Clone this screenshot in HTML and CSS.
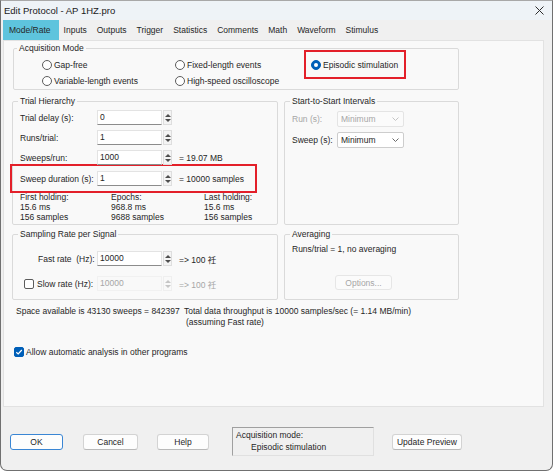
FILE: index.html
```html
<!DOCTYPE html>
<html lang="en">
    <head>
        <meta charset="utf-8">
        <title>Edit Protocol - AP 1HZ.pro</title>
        <link rel="stylesheet" href="styles.css">
    </head>
    <body>
        <div class="window">
            <div class="titlebar">
                <span class="title">Edit Protocol - AP 1HZ.pro</span>
                <svg class="close" width="9" height="9" viewBox="0 0 9 9"><path d="M0.5 0.5L8.5 8.5M8.5 0.5L0.5 8.5" stroke="#2b2b2b" stroke-width="1" fill="none"/></svg>
            </div>

            <ul class="tabs">
                <li class="current">Mode/Rate</li>
                <li>Inputs</li>
                <li>Outputs</li>
                <li>Trigger</li>
                <li>Statistics</li>
                <li>Comments</li>
                <li>Math</li>
                <li>Waveform</li>
                <li>Stimulus</li>
            </ul>

            <div class="panel">
                <!-- acquisition mode -->
                <fieldset class="group group-acq">
                    <legend>Acquisition Mode</legend>
                    <div class="modes">
                        <label class="radio"><span class="dot"></span>Gap-free</label>
                        <label class="radio"><span class="dot"></span>Fixed-length events</label>
                        <div class="mark mark-mode">
                            <label class="radio"><span class="dot on"></span>Episodic stimulation</label>
                        </div>
                        <label class="radio"><span class="dot"></span>Variable-length events</label>
                        <label class="radio"><span class="dot"></span>High-speed oscilloscope</label>
                    </div>
                </fieldset>

                <div class="row row-mid">
                    <fieldset class="group col-left">
                        <legend>Trial Hierarchy</legend>
                        <div class="trial">
                            <div class="field">
                                <span class="lbl">Trial delay (s):</span>
                                <span class="input">0</span><span class="spin"></span>
                            </div>
                            <div class="field">
                                <span class="lbl">Runs/trial:</span>
                                <span class="input">1</span><span class="spin"></span>
                            </div>
                            <div class="field">
                                <span class="lbl">Sweeps/run:</span>
                                <span class="input">1000</span><span class="spin"></span>
                                <span class="after">= 19.07 MB</span>
                            </div>
                            <div class="mark mark-sweep">
                                <div class="field">
                                    <span class="lbl">Sweep duration (s):</span>
                                    <span class="input">1</span><span class="spin"></span>
                                    <span class="after">= 10000 samples</span>
                                </div>
                            </div>
                            <div class="holding">
                                <div>First holding:<br>15.6 ms<br>156 samples</div>
                                <div>Epochs:<br>968.8 ms<br>9688 samples</div>
                                <div>Last holding:<br>15.6 ms<br>156 samples</div>
                            </div>
                        </div>
                    </fieldset>

                    <fieldset class="group col-right">
                        <legend>Start-to-Start Intervals</legend>
                        <div class="intervals">
                            <div class="field field-combo">
                                <span class="lbl lbl-short disabled">Run (s):</span>
                                <span class="combo combo-off">Minimum
                                    <svg width="7" height="4" viewBox="0 0 7 4"><path d="M0.5 0.5L3.5 3.5L6.5 0.5" stroke="#c4c4c4" fill="none"/></svg>
                                </span>
                            </div>
                            <div class="field field-combo">
                                <span class="lbl lbl-short">Sweep (s):</span>
                                <span class="combo">Minimum
                                    <svg width="7" height="4" viewBox="0 0 7 4"><path d="M0.5 0.5L3.5 3.5L6.5 0.5" stroke="#6a6a6a" fill="none"/></svg>
                                </span>
                            </div>
                        </div>
                    </fieldset>
                </div>

                <div class="row row-low">
                    <fieldset class="group col-left">
                        <legend>Sampling Rate per Signal</legend>
                        <div class="sampling">
                            <div class="field">
                                <span class="lbl lbl-fast">Fast rate&nbsp; (Hz):</span>
                                <span class="input">10000</span><span class="spin"></span>
                                <span class="after">=&gt; 100 祍</span>
                            </div>
                            <div class="field">
                                <span class="lbl lbl-slow"><span class="box"></span>Slow rate (Hz):</span>
                                <span class="input input-off">10000</span><span class="spin spin-off"></span>
                                <span class="after disabled">=&gt; 100 祍</span>
                            </div>
                        </div>
                    </fieldset>

                    <fieldset class="group col-right">
                        <legend>Averaging</legend>
                        <div class="averaging">
                            <div class="line">Runs/trial = 1, no averaging</div>
                            <span class="btn btn-off">Options...</span>
                        </div>
                    </fieldset>
                </div>

                <div class="info">
                    <div>Space available is 43130 sweeps = 842397</div>
                    <div>Total data throughput is 10000 samples/sec (= 1.14 MB/min)<br><span class="indent">(assuming Fast rate)</span></div>
                </div>

                <label class="check">
                    <span class="box on">
                        <svg width="8" height="8" viewBox="0 0 8 8"><path d="M1.3 4.2L3.2 6L6.8 2" stroke="#fff" stroke-width="1.2" fill="none"/></svg>
                    </span>Allow automatic analysis in other programs
                </label>
            </div>

            <div class="buttons">
                <span class="btn btn-default btn-ok">OK</span>
                <span class="btn btn-cancel">Cancel</span>
                <span class="btn btn-help">Help</span>
                <div class="status">Acquisition mode:<br><span class="status-val">Episodic stimulation</span></div>
                <span class="btn btn-preview">Update Preview</span>
            </div>
        </div>
    </body>
</html>
```

FILE: styles.css
```css
*{
    margin:0;
    padding:0;
    box-sizing:border-box;
}
body{
    background:#fff;
    font-family:"Liberation Sans", Arial, "Noto Sans CJK SC", sans-serif;
    font-size:8.5px;
    color:#262626;
}
.window{
    width:553px;
    height:471px;
    border:1px solid #707070;
    border-top-color:#a8a8a8;
    border-radius:0 0 7px 7px;
    background:#f0f0f0;
    overflow:hidden;
}

/* title + tabs */
.titlebar{
    height:19px;
    background:#eef3f7;
    display:flex;
    align-items:center;
    justify-content:space-between;
    padding:0 8px 0 3px;
    font-size:9.5px;
    color:#1a1a1a;
}
.close{
    display:block;
}
.tabs{
    list-style:none;
    display:flex;
    height:20px;
    margin-left:2px;
}
.tabs li{
    padding:0 5px;
    line-height:20px;
}
.tabs li.current{
    padding:0 8px 0 6px;
    background:#5ec4dd;
}

/* tab page */
.panel{
    margin-left:2px;
    width:541px;
    height:367px;
    background:#f9f9f9;
    border:1px solid #e2e2e2;
    padding:2px 0 0 8px;
}
.group{
    border:1px solid #dadada;
    border-radius:2px;
    padding:0;
    min-width:0;
}
.group legend{
    margin-left:5px;
    padding:0 2px;
    line-height:10px;
}
.group-acq{
    width:446px;
    margin-left:1px;
}
.group-acq legend{
    margin-left:3px;
}
.row{
    display:flex;
    gap:6px;
}
.row-mid{
    margin-top:6px;
}
.row-low{
    margin-top:4px;
}
.col-left{
    width:266px;
}
.col-right{
    width:175px;
}
.disabled{
    color:#a6a6a6;
}

/* red highlight boxes */
.mark{
    border:2px solid #e3202a;
}

/* acquisition mode */
.modes{
    display:grid;
    grid-template-columns:133px 129px 102px;
    grid-template-rows:16px 16px;
    padding:4px 0 0 28px;
}
.mark-mode{
    grid-column:3;
    grid-row:1 / 3;
    margin-top:-7px;
    height:29px;
    display:flex;
    align-items:center;
    padding-left:5px;
}
.radio{
    display:flex;
    align-items:center;
    gap:2px;
}
.dot{
    width:10px;
    height:10px;
    border:1px solid #5c5c5c;
    border-radius:50%;
    background:#fff;
    display:flex;
    align-items:center;
    justify-content:center;
}
.dot.on{
    border-color:#005fb8;
    background:#005fb8;
}
.dot.on::after{
    content:"";
    width:4px;
    height:4px;
    border-radius:50%;
    background:#fff;
}

/* fields */
.field{
    display:flex;
    align-items:center;
    height:15px;
    margin-bottom:5px;
}
.lbl{
    width:77px;
    flex-shrink:0;
}
.input{
    width:65px;
    height:15px;
    line-height:13px;
    padding-left:2px;
    background:#fff;
    border:1px solid #e3e3e3;
    border-bottom-color:#8c8c8c;
}
.input-off{
    background:#f9f9f9;
    border-color:#f1f1f1;
    color:#a6a6a6;
}
.spin{
    width:9px;
    height:15px;
    margin-left:1px;
    background:#f4f4f4;
    border:1px solid #dedede;
    display:flex;
    flex-direction:column;
    align-items:center;
    justify-content:center;
    gap:2px;
}
.spin::before,
.spin::after{
    content:"";
    border-left:3px solid transparent;
    border-right:3px solid transparent;
}
.spin::before{
    border-bottom:3px solid #4e4e4e;
}
.spin::after{
    border-top:3px solid #4e4e4e;
}
.spin-off{
    background:#f9f9f9;
    border-color:#efefef;
}
.spin-off::before{
    border-bottom-color:#c6c6c6;
}
.spin-off::after{
    border-top-color:#c6c6c6;
}
.after{
    margin-left:7px;
    white-space:nowrap;
}

/* trial hierarchy */
.trial{
    padding:4px 0 2px 7px;
}
.mark-sweep{
    margin:-6px 0 0 -10px;
    width:247px;
    height:29px;
    padding-left:8px;
    display:flex;
    align-items:center;
}
.mark-sweep .field{
    margin-bottom:0;
}
.holding{
    display:grid;
    grid-template-columns:91px 93px auto;
    line-height:10px;
    margin-top:-1px;
}

/* start-to-start */
.intervals{
    padding:5px 0 0 7px;
}
.field-combo{
    height:16px;
}
.lbl-short{
    width:45px;
}
.combo{
    width:67px;
    height:16px;
    background:#fff;
    border:1px solid #cdcdcd;
    border-radius:2px;
    display:flex;
    align-items:center;
    justify-content:space-between;
    padding:0 4px 0 3px;
}
.combo-off{
    background:#fbfbfb;
    border-color:#e4e4e4;
    color:#a6a6a6;
}

/* sampling rate */
.sampling{
    padding:12px 0 8px 7px;
}
.sampling .field{
    margin-bottom:10px;
}
.sampling .field:last-child{
    margin-bottom:0;
}
.lbl-fast{
    padding-left:18px;
    white-space:pre;
}
.lbl-slow{
    display:flex;
    align-items:center;
    gap:3px;
    padding-left:4px;
}
.box{
    width:10px;
    height:10px;
    border:1px solid #5c5c5c;
    border-radius:2px;
    background:#fff;
    flex-shrink:0;
}
.box.on{
    background:#005fb8;
    border-color:#005fb8;
    display:flex;
    align-items:center;
    justify-content:center;
}

/* averaging */
.averaging{
    padding:5px 0 0 7px;
}
.line{
    line-height:10px;
}
.btn{
    display:flex;
    align-items:center;
    justify-content:center;
    height:16px;
    background:#fdfdfd;
    border:1px solid #d3d3d3;
    border-bottom-color:#b9b9b9;
    border-radius:3px;
}
.btn-off{
    width:57px;
    height:15px;
    margin:21px 0 0 43px;
    background:#fbfbfb;
    border-color:#e6e6e6;
    color:#a6a6a6;
}

/* info lines */
.info{
    display:grid;
    grid-template-columns:168px auto;
    padding-left:4px;
    margin-top:6px;
    line-height:11px;
}
.indent{
    padding-left:2px;
}
.check{
    display:flex;
    align-items:center;
    gap:2px;
    margin:19px 0 0 2px;
    line-height:10px;
}

/* bottom buttons */
.buttons{
    display:flex;
    align-items:center;
    height:29px;
    margin-top:20px;
    padding-left:9px;
}
.btn-default{
    border:1px solid #3a86d4;
}
.btn-ok{
    width:53px;
}
.btn-cancel{
    width:55px;
    margin-left:20px;
}
.btn-help{
    width:52px;
    margin-left:19px;
}
.status{
    width:142px;
    height:29px;
    margin-left:23px;
    border:1px solid #a0a0a0;
    border-right-color:#e0e0e0;
    border-bottom-color:#e0e0e0;
    padding:1px 0 0 3px;
    line-height:12px;
}
.status-val{
    padding-left:15px;
}
.btn-preview{
    width:70px;
    margin-left:18px;
}
```
